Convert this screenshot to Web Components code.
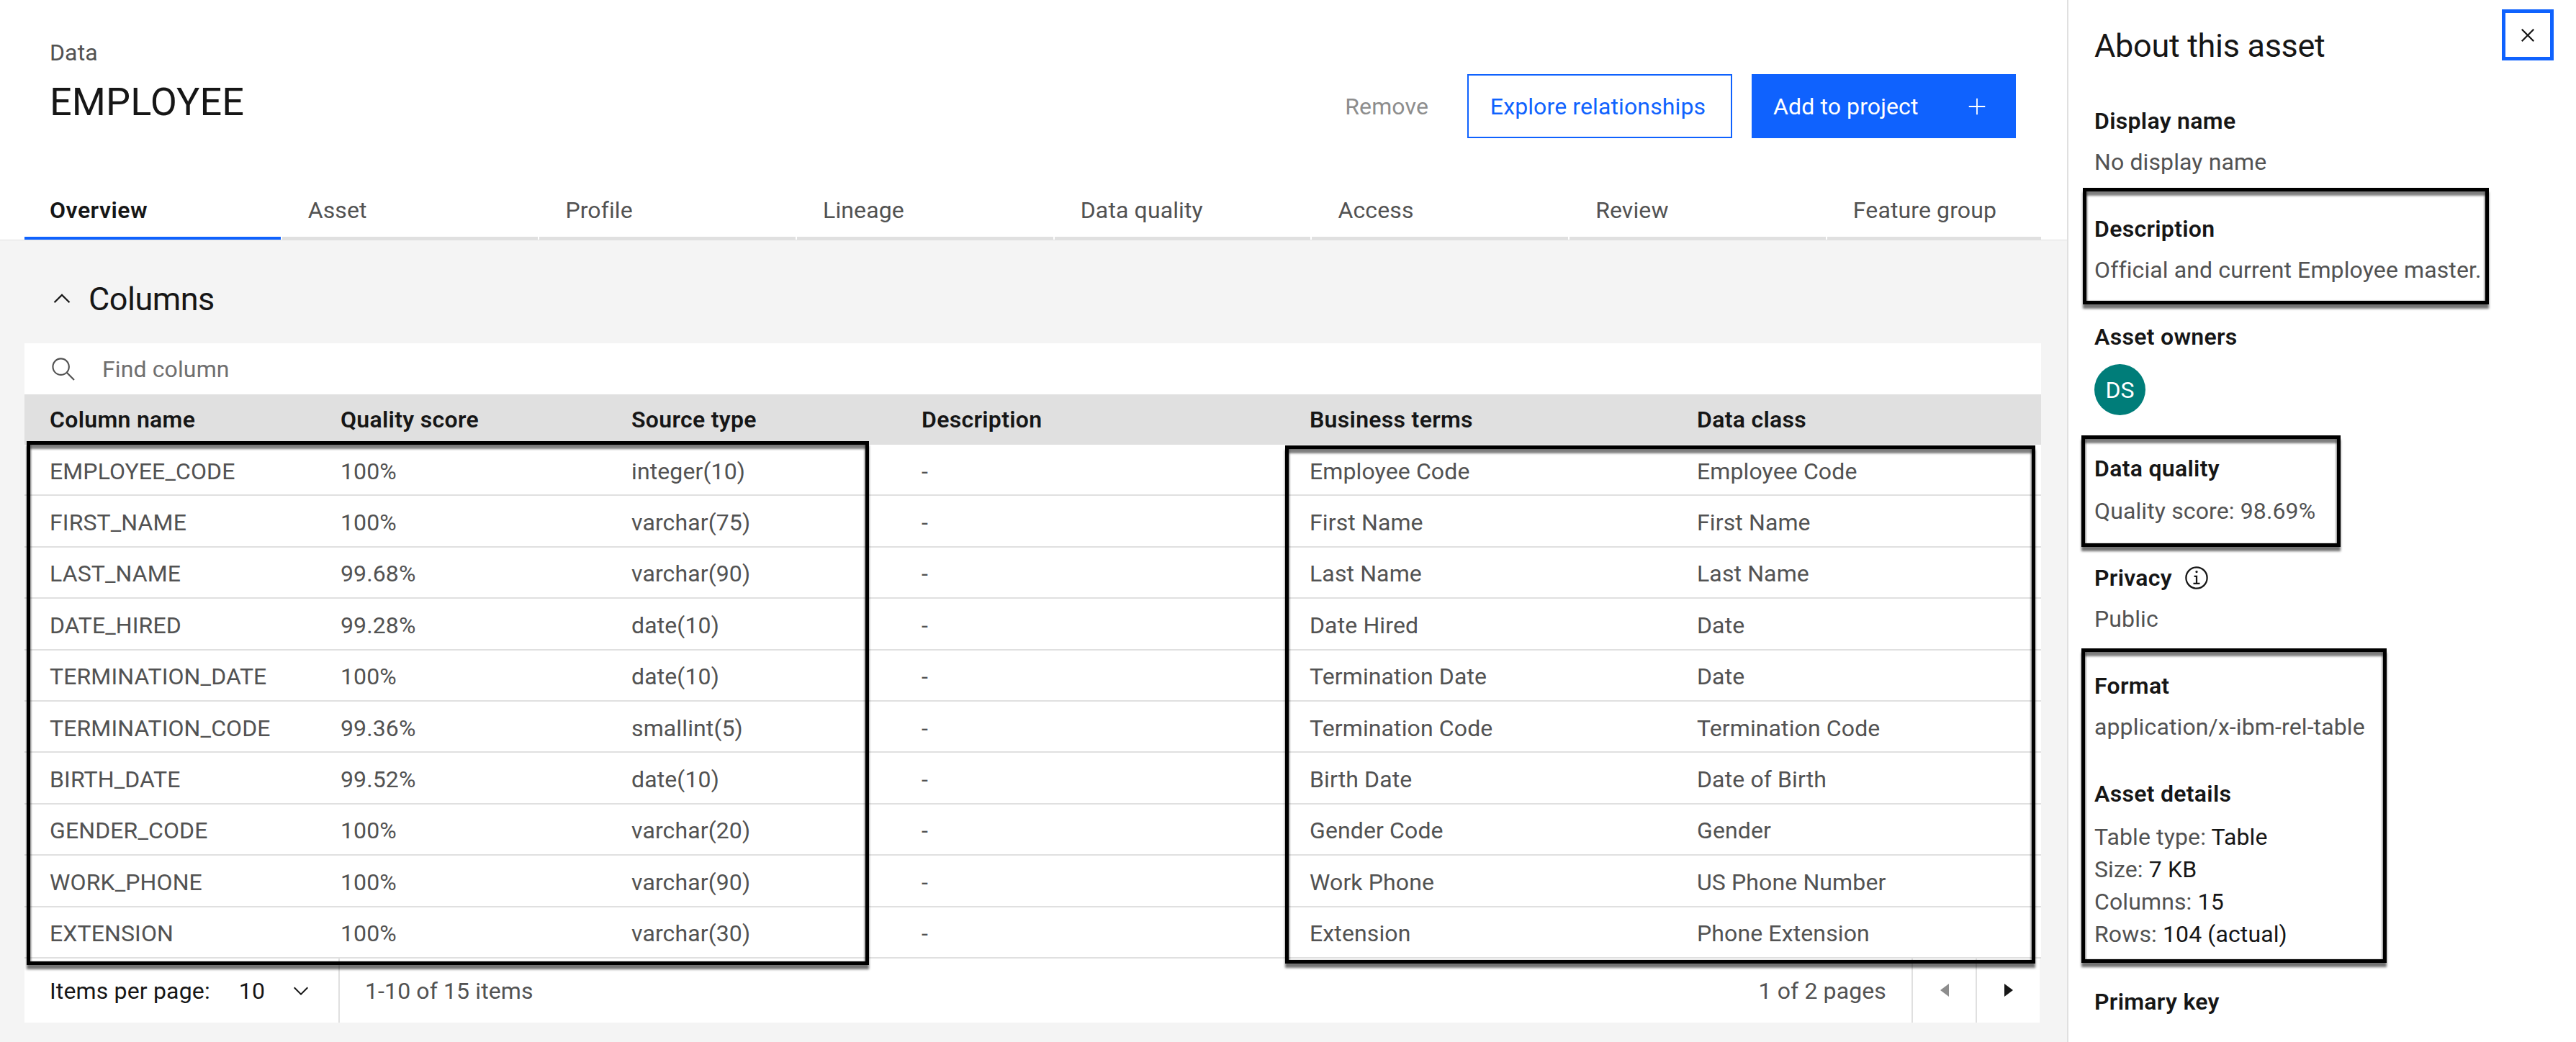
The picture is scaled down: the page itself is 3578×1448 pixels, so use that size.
<!DOCTYPE html>
<html lang="en">
<head>
<meta charset="utf-8">
<title>EMPLOYEE</title>
<style>
  html, body { margin: 0; height: 100%; overflow: hidden; background: #fff; }
  body { font-family: Roboto, "Liberation Sans", sans-serif; color: #161616; }
</style>
</head>
<body>
<asset-page></asset-page>

<script>
const FONT = `Roboto, "Liberation Sans", sans-serif`;

class MarkBox extends HTMLElement {
    connectedCallback() {
        const [x, y, w, h] = this.getAttribute("rect").split(" ");
        this.attachShadow({ mode: "open" }).innerHTML = `
        <style>
            :host {
                position: absolute;
                left: ${x}px;
                top: ${y}px;
                width: ${w}px;
                height: ${h}px;
                box-sizing: border-box;
                border: 5px solid #000;
                pointer-events: none;
                box-shadow: 0 6px 3px rgba(0, 0, 0, .55), inset 0 6px 3px rgba(0, 0, 0, .5), inset 2px 0 2px rgba(0, 0, 0, .2), inset -2px 0 2px rgba(0, 0, 0, .2);
            }
        </style>`;
    }
}

class PageHeader extends HTMLElement {
    connectedCallback() {
        this.attachShadow({ mode: "open" }).innerHTML = `
        <style>
            :host { display: flex; justify-content: space-between; height: 255px; box-sizing: border-box; padding: 50px 71px 0 69px; }
            .crumb { font-size: 32px; line-height: 46px; color: #525252; }
            h1 { margin: 11px 0 0; font-size: 54px; line-height: 70px; font-weight: 400; color: #161616; }
            .actions { display: flex; align-items: center; height: 89px; margin-top: 53px; font-size: 32px; }
            .remove { color: #8d8d8d; margin-right: 54px; }
            .btn { display: flex; align-items: center; box-sizing: border-box; height: 89px; }
            .ghost { width: 368px; justify-content: center; border: 2px solid #0f62fe; color: #0f62fe; margin-right: 27px; padding-right: 5px; }
            .primary { width: 367px; background: #0f62fe; color: #fff; padding-left: 30px; justify-content: space-between; padding-right: 36px; }
            svg { width: 36px; height: 36px; fill: #fff; }
        </style>
        <div>
            <div class="crumb">Data</div>
            <h1>EMPLOYEE</h1>
        </div>
        <div class="actions">
            <span class="remove">Remove</span>
            <div class="btn ghost">Explore relationships</div>
            <div class="btn primary">Add to project
                <svg viewBox="0 0 16 16"><polygon points="8.4 7.6 8.4 3 7.6 3 7.6 7.6 3 7.6 3 8.4 7.6 8.4 7.6 13 8.4 13 8.4 8.4 13 8.4 13 7.6"/></svg>
            </div>
        </div>`;
    }
}

class TabBar extends HTMLElement {
    connectedCallback() {
        const tabs = this.getAttribute("tabs").split(",");
        this.attachShadow({ mode: "open" }).innerHTML = `
        <style>
            :host { display: block; border-bottom: 1px solid #e0e0e0; padding-left: 34px; background: #fff; }
            .list { display: flex; width: 2801px; overflow: hidden; }
            .tab {
                flex: 0 0 355.7px;
                margin-right: 2px;
                height: 78px;
                box-sizing: border-box;
                padding: 0 0 0 36px;
                display: flex;
                align-items: center;
                border-bottom: 4px solid #e0e0e0;
                font-size: 32px;
                color: #525252;
            }
            .tab.on { border-bottom-color: #0f62fe; color: #161616; font-weight: 600; letter-spacing: .5px; padding-left: 35px; }
        </style>
        <div class="list">
            ${tabs.map((t, i) => `<div class="tab ${i ? "" : "on"}">${t}</div>`).join("")}
        </div>`;
    }
}

const HEADS = ["Column name", "Quality score", "Source type", "Description", "Business terms", "Data class"];
const ROWS = [
    ["EMPLOYEE_CODE", "100%", "integer(10)", "-", "Employee Code", "Employee Code"],
    ["FIRST_NAME", "100%", "varchar(75)", "-", "First Name", "First Name"],
    ["LAST_NAME", "99.68%", "varchar(90)", "-", "Last Name", "Last Name"],
    ["DATE_HIRED", "99.28%", "date(10)", "-", "Date Hired", "Date"],
    ["TERMINATION_DATE", "100%", "date(10)", "-", "Termination Date", "Date"],
    ["TERMINATION_CODE", "99.36%", "smallint(5)", "-", "Termination Code", "Termination Code"],
    ["BIRTH_DATE", "99.52%", "date(10)", "-", "Birth Date", "Date of Birth"],
    ["GENDER_CODE", "100%", "varchar(20)", "-", "Gender Code", "Gender"],
    ["WORK_PHONE", "100%", "varchar(90)", "-", "Work Phone", "US Phone Number"],
    ["EXTENSION", "100%", "varchar(30)", "-", "Extension", "Phone Extension"],
];

class ColumnsTable extends HTMLElement {
    connectedCallback() {
        const cells = (row) => row.map(c => `<div class="cell">${c}</div>`).join("");
        this.attachShadow({ mode: "open" }).innerHTML = `
        <style>
            :host { display: block; width: 2801px; margin-left: 34px; font-size: 32px; }
            .search { display: flex; align-items: center; height: 71px; background: #fff; padding-left: 36px; color: #6f6f6f; }
            .search svg { width: 36px; height: 36px; fill: #525252; margin-right: 36px; }
            .row { display: grid; grid-template-columns: 403px 404px 403px 539px 538px 514px; }
            .head { height: 70px; background: #e0e0e0; font-weight: 600; letter-spacing: .3px; color: #161616; }
            .body { height: 71.4px; box-sizing: border-box; background: #fff; border-bottom: 2px solid #e0e0e0; color: #525252; }
            .cell { padding-left: 36px; display: flex; align-items: center; white-space: nowrap; }
            .cell:first-child { padding-left: 35px; }
            .body .cell { padding-top: 4px; }
        </style>
        <div class="search">
            <svg viewBox="0 0 16 16"><path d="M15 14.3 10.7 10c1.9-2.3 1.6-5.8-.7-7.7S4.2.7 2.3 3 .7 8.8 3 10.7c2 1.7 5 1.7 7 0l4.3 4.3.7-.7zM2 6.5C2 4 4 2 6.5 2S11 4 11 6.5 9 11 6.5 11 2 9 2 6.5z"/></svg>
            Find column
        </div>
        <div class="row head">${cells(HEADS)}</div>
        ${ROWS.map(r => `<div class="row body">${cells(r)}</div>`).join("")}
        <slot></slot>`;
    }
}

class TablePager extends HTMLElement {
    connectedCallback() {
        this.attachShadow({ mode: "open" }).innerHTML = `
        <style>
            :host { display: flex; align-items: stretch; width: 2799px; height: 89px; background: #fff; font-size: 32px; color: #525252; }
            .per { display: flex; align-items: center; padding: 2px 0 0 35px; box-sizing: border-box; border-right: 2px solid #e0e0e0; width: 438px; color: #161616; letter-spacing: .16px; }
            .per .n { margin-left: 40px; }
            .per svg { width: 32px; height: 32px; fill: #161616; margin-left: 34px; }
            .range { flex: 1; display: flex; align-items: center; padding: 2px 0 0 35px; }
            .pages { display: flex; align-items: center; padding: 2px 35px 0 0; }
            .nav { width: 89px; box-sizing: border-box; border-left: 2px solid #e0e0e0; display: flex; align-items: center; justify-content: center; }
            .nav svg { width: 12px; height: 18px; }
        </style>
        <div class="per">Items per page: <span class="n">10</span>
            <svg viewBox="0 0 16 16"><polygon points="8 11 3 6 3.7 5.3 8 9.6 12.3 5.3 13 6"/></svg>
        </div>
        <div class="range">1-10 of 15 items</div>
        <div class="pages">1 of 2 pages</div>
        <div class="nav"><svg viewBox="0 0 12 18"><polygon points="12 0 12 18 0 9" fill="#8d8d8d"/></svg></div>
        <div class="nav"><svg viewBox="0 0 12 18"><polygon points="0 0 12 9 0 18" fill="#161616"/></svg></div>`;
    }
}

class ColumnsSection extends HTMLElement {
    connectedCallback() {
        this.attachShadow({ mode: "open" }).innerHTML = `
        <style>
            :host { display: block; flex: 1; background: #f4f4f4; }
            h2 { display: flex; align-items: center; height: 56px; margin: 53px 0 34px 68px; font-size: 45px; font-weight: 400; letter-spacing: -.5px; color: #161616; }
            svg { width: 36px; height: 36px; fill: #161616; margin-right: 19px; }
        </style>
        <h2><svg viewBox="0 0 16 16"><polygon points="8 5 13 10 12.3 10.7 8 6.4 3.7 10.7 3 10"/></svg>Columns</h2>
        <slot></slot>`;
    }
}

class InfoGroup extends HTMLElement {
    connectedCallback() {
        const gap = this.getAttribute("gap") || 47;
        this.attachShadow({ mode: "open" }).innerHTML = `
        <style>
            :host { display: block; margin-bottom: ${gap}px; font-size: 32px; line-height: 46px; color: #525252; }
            .label { display: flex; align-items: center; font-weight: 600; letter-spacing: .3px; color: #161616; padding-bottom: 11px; }
            ::slotted(svg) { width: 36px; height: 36px; margin-left: 16px; fill: #161616; }
        </style>
        <div class="label">${this.getAttribute("label")}<slot name="icon"></slot></div>
        <slot></slot>`;
    }
}

class AssetPanel extends HTMLElement {
    connectedCallback() {
        this.attachShadow({ mode: "open" }).innerHTML = `
        <style>
            :host { position: relative; display: block; flex: 0 0 707px; box-sizing: border-box; border-left: 2px solid #e0e0e0; padding: 36px 0 0 36px; background: #fff; overflow: hidden; }
            h2 { margin: 0 0 53px; font-size: 45px; line-height: 56px; font-weight: 400; letter-spacing: -.3px; color: #161616; }
            .close { position: absolute; left: 602px; top: 13px; width: 72px; height: 71px; box-sizing: border-box; border: 5px solid #0f62fe; display: flex; align-items: center; justify-content: center; }
            .close svg { width: 36px; height: 36px; fill: #161616; }
        </style>
        <h2>About this asset</h2>
        <div class="close"><svg viewBox="0 0 16 16"><polygon points="12 4.7 11.3 4 8 7.3 4.7 4 4 4.7 7.3 8 4 11.3 4.7 12 8 8.7 11.3 12 12 11.3 8.7 8"/></svg></div>
        <slot></slot>`;
    }
}

class AvatarBadge extends HTMLElement {
    connectedCallback() {
        this.attachShadow({ mode: "open" }).innerHTML = `
        <style>
            :host { display: flex; align-items: center; justify-content: center; width: 71px; height: 71px; margin-top: 4px; border-radius: 50%; background: #007d79; color: #fff; font-size: 32px; }
        </style>
        <slot></slot>`;
    }
}

class AssetPage extends HTMLElement {
    connectedCallback() {
        const tabs = "Overview,Asset,Profile,Lineage,Data quality,Access,Review,Feature group";
        this.attachShadow({ mode: "open" }).innerHTML = `
        <style>
            :host { position: relative; display: flex; width: 3578px; height: 1448px; overflow: hidden; font-family: ${FONT}; letter-spacing: .12px; }
            .main { flex: 1; display: flex; flex-direction: column; min-width: 0; background: #fff; }
            .dark { color: #161616; }
            .score { margin-top: 2px; }
            .details { margin-top: 3.5px; line-height: 45px; font-size: 32px; color: #525252; }
        </style>
        <div class="main">
            <page-header></page-header>
            <tab-bar tabs="${tabs}"></tab-bar>
            <columns-section>
                <columns-table><table-pager></table-pager></columns-table>
            </columns-section>
        </div>
        <asset-panel>
            <info-group label="Display name">No display name</info-group>
            <info-group label="Description">Official and current Employee master.</info-group>
            <info-group label="Asset owners" gap="51"><avatar-badge>DS</avatar-badge></info-group>
            <info-group label="Data quality"><div class="score">Quality score: 98.69%</div></info-group>
            <info-group label="Privacy">
                <svg slot="icon" viewBox="0 0 16 16"><path d="M8.5 11V6.5h-2v1h1V11H6v1h4v-1zM8 3.5a.75.75 0 1 0 0 1.5.75.75 0 0 0 0-1.5z"/><path d="M8 15a7 7 0 1 1 0-14 7 7 0 0 1 0 14zM8 2a6 6 0 1 0 0 12A6 6 0 0 0 8 2z"/></svg>
                Public
            </info-group>
            <info-group label="Format">application/x-ibm-rel-table</info-group>
            <info-group label="Asset details" gap="48.5">
                <div class="details">
                    <div>Table type: <span class="dark">Table</span></div>
                    <div>Size: <span class="dark">7 KB</span></div>
                    <div>Columns: <span class="dark">15</span></div>
                    <div>Rows: <span class="dark">104 (actual)</span></div>
                </div>
            </info-group>
            <info-group label="Primary key"></info-group>
        </asset-panel>
        <mark-box rect="37 613 1170 728"></mark-box>
        <mark-box rect="1785 619 1042 720"></mark-box>
        <mark-box rect="2893 261 564 162"></mark-box>
        <mark-box rect="2891 605 360 155"></mark-box>
        <mark-box rect="2891 901 424 437"></mark-box>`;
    }
}

customElements.define("mark-box", MarkBox);
customElements.define("page-header", PageHeader);
customElements.define("tab-bar", TabBar);
customElements.define("columns-table", ColumnsTable);
customElements.define("table-pager", TablePager);
customElements.define("columns-section", ColumnsSection);
customElements.define("info-group", InfoGroup);
customElements.define("avatar-badge", AvatarBadge);
customElements.define("asset-panel", AssetPanel);
customElements.define("asset-page", AssetPage);
</script>
</body>
</html>
